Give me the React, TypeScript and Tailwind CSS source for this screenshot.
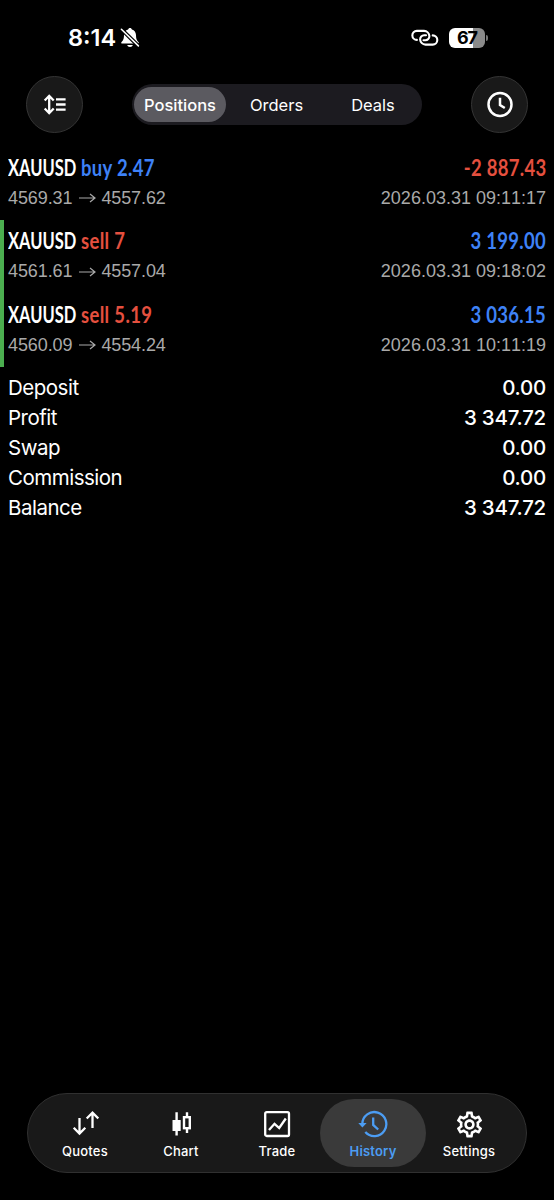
import type { ReactNode } from 'react'

// =============================================================
//  Data
// =============================================================

interface Position {
  symbol: string
  side: 'buy' | 'sell'
  volume: string
  open: string
  close: string
  profit: string
  time: string
}

const positions: Position[] = [
  { symbol: 'XAUUSD', side: 'buy',  volume: '2.47', open: '4569.31', close: '4557.62', profit: '-2 887.43', time: '2026.03.31 09:11:17' },
  { symbol: 'XAUUSD', side: 'sell', volume: '7',    open: '4561.61', close: '4557.04', profit: '3 199.00',  time: '2026.03.31 09:18:02' },
  { symbol: 'XAUUSD', side: 'sell', volume: '5.19', open: '4560.09', close: '4554.24', profit: '3 036.15',  time: '2026.03.31 10:11:19' },
]

const summary = [
  { label: 'Deposit',    value: '0.00' },
  { label: 'Profit',     value: '3 347.72' },
  { label: 'Swap',       value: '0.00' },
  { label: 'Commission', value: '0.00' },
  { label: 'Balance',    value: '3 347.72' },
]

const segments = ['Positions', 'Orders', 'Deals']

// =============================================================
//  Icons
// =============================================================

const BellOff = () => (
  <svg width="20" height="22" viewBox="0 0 20 22" fill="none">
    <path d="M10 1c1 0 1.700.6 1.900 1.500 2.600.8 4 2.900 4.100 5.600.1 4.200.9 5.400 2.600 7.200.5.500.1 1.300-.6 1.300H2c-.7 0-1.100-.8-.6-1.300C3.100 13.500 3.900 12.300 4 8.100c.1-2.700 1.500-4.800 4.100-5.600C8.300 1.600 9 1 10 1Z" fill="white" />
    <path d="M7.200 18h5.600c-.3 1.200-1.400 2-2.800 2s-2.500-.8-2.800-2Z" fill="white" />
    <path d="M1 1.800 18.800 19.400" stroke="black" strokeWidth="4" />
    <path d="M1.400 2.300 18.400 18.900" stroke="white" strokeWidth="1.600" strokeLinecap="round" />
  </svg>
)

const Chain = () => (
  <svg width="28" height="18" viewBox="0 0 28 18" fill="none" stroke="white" strokeWidth="2.1" strokeLinecap="round">
    <path d="M5.900 10.900A4.500 4.500 0 0 1 5.800 1.900H13a5.600 5.600 0 0 1 5.400 5.200c0 2.300-1.700 4.100-4 4.100h-1.900" />
    <path d="M21.700 6.400a4.600 4.600 0 0 1 0 9.200H14.500a5.600 5.600 0 0 1-5.400-5.200c0-2.300 1.700-4.100 4-4.100h1.900" />
  </svg>
)

const SortIcon = () => (
  <svg width="26" height="24" viewBox="0 0 26 24" fill="none" stroke="white" strokeWidth="2.3">
    <path d="M7.200 3v17M2.700 7.500l4.500-4.700 4.500 4.700M2.700 15.500l4.500 4.700 4.500-4.700" />
    <path d="M14 6.300h9.600M14 11.500h9.600M14 16.700h9.600" />
  </svg>
)

const ClockIcon = () => (
  <svg width="28" height="28" viewBox="0 0 28 28" fill="none" stroke="white" strokeWidth="2.5">
    <circle cx="14" cy="13.500" r="11.500" />
    <path d="M14 6.800v7.200l4.800 3" />
  </svg>
)

const QuotesIcon = () => (
  <svg width="28" height="28" viewBox="0 0 28 28" fill="none" stroke="currentColor" strokeWidth="2.3">
    <path d="M8.500 8v15.500M2.700 17.800l5.800 5.800 5.800-5.800" />
    <path d="M21.500 18V2.800M15.700 8.500l5.800-5.800 5.800 5.800" />
  </svg>
)

const ChartIcon = () => (
  <svg width="28" height="28" viewBox="0 0 28 28" fill="none" stroke="currentColor" strokeWidth="2.4">
    <path d="M9.600 2.300v23.200M20 2.300V7M20 18.500v4.500" />
    <rect x="5.500" y="10" width="8.200" height="11" rx=".6" fill="currentColor" stroke="none" />
    <rect x="17" y="7.200" width="5.800" height="11" />
  </svg>
)

const TradeIcon = () => (
  <svg width="28" height="28" viewBox="0 0 28 28" fill="none" stroke="currentColor" strokeWidth="2.3">
    <rect x="2.200" y="2.200" width="23.800" height="23.800" rx="1.500" />
    <path d="M6 20l5.500-6.200 4.700 4.200L22.800 8.500" />
  </svg>
)

const HistoryIcon = () => (
  <svg width="30" height="28" viewBox="0 0 30 28" fill="none" stroke="currentColor" strokeWidth="2.3">
    <path d="M4.300 13.800A12 12 0 1 1 7.300 22" />
    <path d="M.3 13.100h8.300l-4.200 4.500Z" fill="currentColor" stroke="none" />
    <path d="M15.200 7.500v7.400l5 4.600" />
  </svg>
)

const SettingsIcon = () => (
  <svg width="31" height="31" viewBox="0 0 24 24" fill="currentColor">
    <path d="M19.430 12.980c.04-.320.070-.640.070-.980s-.030-.660-.070-.980l2.110-1.650c.190-.150.240-.420.120-.640l-2-3.460c-.090-.160-.260-.250-.440-.250-.060 0-.120.010-.170.030l-2.490 1c-.520-.400-1.080-.730-1.690-.980l-.380-2.650C14.460 2.180 14.250 2 14 2h-4c-.250 0-.460.180-.490.420l-.380 2.650c-.610.250-1.170.590-1.690.980l-2.490-1c-.060-.020-.120-.030-.180-.030-.170 0-.340.090-.430.250l-2 3.460c-.130.220-.070.490.120.640l2.110 1.650c-.040.320-.070.650-.070.980s.030.660.070.980l-2.110 1.650c-.190.150-.240.420-.120.640l2 3.460c.090.160.260.250.440.250.060 0 .120-.010.170-.030l2.490-1c.520.400 1.080.730 1.690.980l.380 2.650c.030.240.240.420.490.420h4c.250 0 .460-.180.490-.420l.380-2.650c.610-.250 1.170-.590 1.690-.980l2.490 1c.060.020.120.030.180.030.170 0 .340-.090.430-.250l2-3.460c.120-.220.070-.490-.120-.640l-2.110-1.650Zm-1.980-1.710c.040.310.050.520.050.730s-.020.430-.050.730l-.140 1.130.890.700 1.080.840-.700 1.210-1.270-.510-1.040-.420-.900.680c-.430.320-.840.560-1.250.730l-1.060.430-.160 1.130-.200 1.350h-1.400l-.350-2.480-1.060-.430c-.430-.180-.830-.410-1.230-.710l-.910-.700-1.060.430-1.270.510-.700-1.210 1.080-.840.890-.700-.140-1.130c-.030-.310-.050-.540-.050-.740s.020-.430.050-.730l.140-1.130-.890-.700-1.080-.840.700-1.210 1.270.510 1.040.420.900-.680c.430-.320.840-.560 1.250-.730l1.060-.430.350-2.480h1.390l.350 2.480 1.060.430c.430.180.830.410 1.230.710l.910.700 1.060-.430 1.270-.510.700 1.210-1.070.850-.890.700.140 1.130ZM12 8c-2.210 0-4 1.790-4 4s1.790 4 4 4 4-1.790 4-4-1.790-4-4-4Zm0 6c-1.100 0-2-.900-2-2s.900-2 2-2 2 .900 2 2-.900 2-2 2Z" />
  </svg>
)

const tabs: { label: string; icon: ReactNode }[] = [
  { label: 'Quotes',   icon: <QuotesIcon /> },
  { label: 'Chart',    icon: <ChartIcon /> },
  { label: 'Trade',    icon: <TradeIcon /> },
  { label: 'History',  icon: <HistoryIcon /> },
  { label: 'Settings', icon: <SettingsIcon /> },
]

// =============================================================
//  Sections
// =============================================================

function StatusBar() {
  return (
    <div className="flex h-[76px] items-center justify-between pl-[68px] pr-[66px]">
      <div className="flex items-center gap-1">
        <span className="text-[23.5px] font-semibold leading-none">8:14</span>
        <BellOff />
      </div>
      <div className="flex items-center gap-[10px]">
        <Chain />
        <div className="flex items-center gap-px">
          <div className="flex h-5 w-9 items-center justify-center rounded-[6px] bg-linear-to-r from-white from-67% to-[#8a8a8a] to-67%">
            <span className="text-[18px] font-bold leading-none tracking-[-1px] text-black">67</span>
          </div>
          <div className="h-[6px] w-[2px] rounded-r-full bg-[#777]" />
        </div>
      </div>
    </div>
  )
}

function RoundButton({ children }: { children: ReactNode }) {
  return (
    <button className="flex size-[57px] items-center justify-center rounded-full border border-[#343434] bg-[#191919]">
      {children}
    </button>
  )
}

function Header() {
  return (
    <header className="flex h-[57px] items-center justify-between px-[26px]">
      <RoundButton><SortIcon /></RoundButton>
      <div className="grid h-[41px] w-[290px] grid-cols-[92px_101px_92px] rounded-full bg-[#1c1b20] p-[3px] pl-[2px]">
        {segments.map((label) => (
          <button
            key={label}
            className={`flex items-center justify-center rounded-full pt-[2px] text-[16.5px] ${
              label === 'Positions' ? 'bg-[#5b5a60] font-medium' : ''
            }`}
          >
            {label}
          </button>
        ))}
      </div>
      <RoundButton><ClockIcon /></RoundButton>
    </header>
  )
}

function PositionRow({ item }: { item: Position }) {
  const won = !item.profit.startsWith('-')

  return (
    <div className={`flex h-[73.5px] flex-col border-l-4 pl-1 pr-2 pt-[7px] ${won ? 'border-[#4bae4f]' : 'border-transparent'}`}>
      <div className="flex h-7 items-center justify-between whitespace-nowrap font-['Lato',sans-serif] text-[22px] font-bold">
        <div className="flex">
          <div className="w-[73px]">
            <span className="inline-block origin-left scale-x-75">{item.symbol}</span>
          </div>
          <span className={`origin-left scale-x-[0.84] tracking-[0.4px] ${item.side === 'buy' ? 'text-[#3e82f7]' : 'text-[#e5503f]'}`}>
            {item.side} {item.volume}
          </span>
        </div>
        <span className={`origin-right scale-x-[0.84] tracking-[0.35px] ${won ? 'text-[#3e82f7]' : 'text-[#e5503f]'}`}>
          {item.profit}
        </span>
      </div>
      <div className="mt-[5px] flex h-6 items-center justify-between font-['Liberation_Sans',sans-serif] text-[18px] text-[#a9a9a9] [font-kerning:none]">
        <span className="flex items-center tracking-[-0.1px]">
          {item.open}
          <svg className="ml-[6px] mr-[5px]" width="18" height="12" viewBox="0 0 18 12" fill="none" stroke="currentColor" strokeWidth="1.2">
            <path d="M1 6h16M12 2l5 4-5 4" />
          </svg>
          {item.close}
        </span>
        <span>{item.time}</span>
      </div>
    </div>
  )
}

function Summary() {
  return (
    <dl className="px-2 pt-[6.500px] text-[20.5px]">
      {summary.map((row) => (
        <div key={row.label} className="flex h-[30px] items-center justify-between">
          <dt className="tracking-[-0.5px]">{row.label}</dt>
          <dd className="font-medium tracking-[-0.25px]">{row.value}</dd>
        </div>
      ))}
    </dl>
  )
}

function TabBar() {
  return (
    <nav className="mx-[27px] mb-[27px] mt-auto grid h-20 grid-cols-5 rounded-full border border-[#303030] bg-[#191919] py-[5px] pl-[9px] pr-[9px]">
      {tabs.map((tab) => (
        <button
          key={tab.label}
          className={`-mx-[5px] flex flex-col items-center justify-start rounded-full pt-[10px] ${
            tab.label === 'History' ? 'bg-[#3a3a3a] font-semibold text-[#4c9df3]' : 'font-medium text-white'
          }`}
        >
          <span className="flex h-[30px] items-center">{tab.icon}</span>
          <span className="mt-[2px] text-[13px] leading-5 tracking-[0.2px]">{tab.label}</span>
        </button>
      ))}
    </nav>
  )
}

export default function App() {
  return (
    <div className="flex h-[1200px] w-[554px] flex-col overflow-hidden bg-black font-['Inter',sans-serif] text-white">
      <StatusBar />
      <Header />
      <main className="pt-[13px]">
        {positions.map((item) => (
          <PositionRow key={item.time} item={item} />
        ))}
        <Summary />
      </main>
      <TabBar />
    </div>
  )
}
